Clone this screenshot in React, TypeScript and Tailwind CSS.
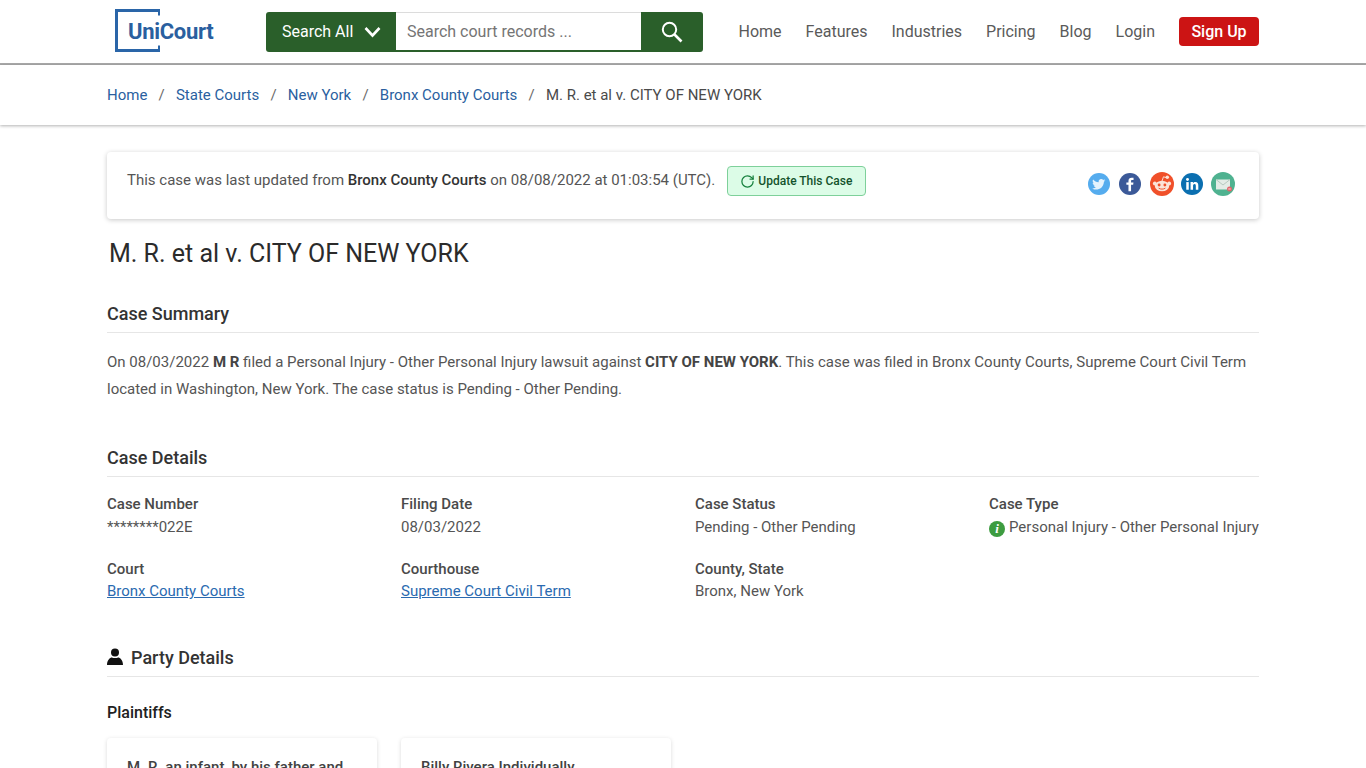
import React from 'react';
import { RotateCw } from 'lucide-react';

const navLinks = ['Home', 'Features', 'Industries', 'Pricing', 'Blog', 'Login'];

const crumbs = ['Home', 'State Courts', 'New York', 'Bronx County Courts'];

const Logo = () => (
  <div className="relative w-[107px] h-[44px] ml-[8px] mb-[1px]">
    <svg width="46" height="44" viewBox="0 0 46 44" className="absolute left-0 top-0">
      <path d="M44 1.500H1.500V41.500H44" fill="none" stroke="#2a65a8" strokeWidth="3" />
      <path d="M44 0V6.500M44 36.500V43" stroke="#2a65a8" strokeWidth="2" />
    </svg>
    <span className="absolute left-[13px] top-[8px] text-[22px] leading-[30px] font-bold tracking-[-0.3px] text-[#2a5f9f]">UniCourt</span>
  </div>
);

const SocialIcons = () => (
  <div className="flex items-center gap-[8px] mr-[24px] mt-[6px]">
    <svg width="22" height="22" viewBox="0 0 23 23">
      <circle cx="11.500" cy="11.500" r="11.500" fill="#55acee" />
      <path d="M18 7.500c-.5.2-1 .4-1.600.5.6-.4 1-.9 1.200-1.500-.5.3-1.100.5-1.700.7a2.800 2.800 0 0 0-4.800 2.500c-2.300-.1-4.400-1.200-5.800-2.900-.8 1.300-.4 3 .9 3.800-.5 0-.9-.1-1.300-.4 0 1.400 1 2.500 2.300 2.800-.4.100-.8.100-1.300 0 .4 1.100 1.400 1.900 2.600 2-1.200.9-2.700 1.300-4.200 1.100 4.500 2.900 11.800.9 12.400-6.900.6-.4 1-.9 1.300-1.300z" fill="#fff" opacity=".85" />
    </svg>
    <svg width="22" height="22" viewBox="0 0 23 23" className="ml-[1px]">
      <circle cx="11.500" cy="11.500" r="11.500" fill="#3b5998" />
      <path d="M12.600 19v-6.600h2.200l.3-2.500h-2.500V8.400c0-.7.200-1.200 1.200-1.200h1.400V5c-.3 0-1-.1-2-.1-2 0-3.300 1.200-3.300 3.400v1.600H7.700v2.500h2.200V19z" fill="#fff" />
    </svg>
    <svg width="24" height="24" viewBox="0 0 25 25" className="ml-[1px]">
      <circle cx="12.500" cy="12.500" r="12.500" fill="#f0502a" />
      <ellipse cx="12.500" cy="14.500" rx="7.500" ry="5.500" fill="#fbe3d8" />
      <circle cx="5" cy="12" r="2" fill="#fbe3d8" />
      <circle cx="20" cy="12" r="2" fill="#fbe3d8" />
      <circle cx="9.500" cy="13.500" r="1.500" fill="#f0502a" />
      <circle cx="15.500" cy="13.500" r="1.500" fill="#f0502a" />
      <path d="M9 16.800c2 1.400 5 1.400 7 0" fill="none" stroke="#f0502a" strokeWidth="1" />
      <path d="M12.500 9.500 14 5l3.500 1" fill="none" stroke="#fbe3d8" strokeWidth="1" />
      <circle cx="18" cy="5.500" r="1.800" fill="#fbe3d8" />
    </svg>
    <svg width="22" height="22" viewBox="0 0 23 23" className="-ml-[1px]">
      <circle cx="11.500" cy="11.500" r="11.500" fill="#0b6fb0" />
      <rect x="5.500" y="9.500" width="2.600" height="8" fill="#fff" />
      <circle cx="6.800" cy="6.800" r="1.500" fill="#fff" />
      <path d="M10 9.500h2.500v1.100c.5-.8 1.400-1.300 2.600-1.300 2.200 0 3 1.400 3 3.700v4.500h-2.600v-4c0-1.200-.3-2-1.300-2-1.100 0-1.600.8-1.600 2v4H10z" fill="#fff" />
    </svg>
    <svg width="24" height="24" viewBox="0 0 24 24">
      <circle cx="12" cy="12" r="12" fill="#4fb290" />
      <rect x="5" y="7.500" width="14" height="10" fill="#e3ece6" />
      <path d="M5 7.500 12 13l7-5.500" fill="none" stroke="#b6c9bf" strokeWidth="1" />
      <circle cx="18.500" cy="17" r="2.500" fill="#e2646a" />
      <path d="M17.300 17h2.400" stroke="#fff" strokeWidth=".8" />
    </svg>
  </div>
);

const Field = ({ label, first, children }: { label: string; first?: boolean; children: React.ReactNode }) => (
  <div>
    <p className={first ? 'text-[15px] leading-[22px] mb-[1px] font-medium text-[#4a4a4a]' : 'text-[15px] leading-[22px] font-medium text-[#4a4a4a]'}>{label}</p>
    <div className="text-[15px] leading-[23px] text-[#555555]">{children}</div>
  </div>
);

const SectionHeading = ({ children }: { children: React.ReactNode }) => (
  <h2 className="text-[18px] leading-[24px] font-medium text-[#333333] pb-[6px] border-b border-[#e6e6e6]">{children}</h2>
);

const App: React.FC = () => {
  return (
    <div className="h-[768px] overflow-hidden bg-white font-['Roboto',sans-serif] text-[#555555]">
      <header className="h-[65px] bg-white border-b-2 border-[#a9a9a9] flex items-center pl-[107px] pr-[107px]">
        <Logo />
        <div className="flex h-[40px] ml-[44px]">
          <button className="w-[130px] h-full bg-[#2a5f2a] rounded-l-[3px] text-white text-[16px] flex items-center pl-[16px] gap-[11px]">
            Search All
            <svg width="17" height="12" viewBox="0 0 17 12">
              <path d="M1.500 2 8.500 9.500 15.500 2" fill="none" stroke="#fff" strokeWidth="2.600" />
            </svg>
          </button>
          <div className="w-[245px] h-full border-t border-[#dcdcdc] border-b-2 border-b-[#2a5f2a] flex items-center pl-[11px] pt-[1px] text-[16px] text-[#757575]">
            Search court records ...
          </div>
          <button className="w-[62px] h-full bg-[#2a5f2a] rounded-r-[3px] flex items-center justify-center">
            <svg width="22" height="22" viewBox="0 0 22 22">
              <circle cx="8.500" cy="8.500" r="6.700" fill="none" stroke="#fff" strokeWidth="2" />
              <path d="M13.500 13.500 20.500 20.500" stroke="#fff" strokeWidth="2.600" />
            </svg>
          </button>
        </div>
        <nav className="flex items-center ml-auto text-[16px] text-[#5a5a5a] gap-[24px]">
          {navLinks.map((link) => (
            <a key={link} className="block">{link}</a>
          ))}
          <a className="block bg-[#cc1414] text-white font-medium rounded-[4px] h-[29px] leading-[29px] w-[80px] text-center">Sign Up</a>
        </nav>
      </header>

      <div className="h-[60px] bg-white shadow-[0_1px_3px_rgba(0,0,0,0.3)] flex items-center px-[107px] text-[15px]">
        {crumbs.map((crumb) => (
          <React.Fragment key={crumb}>
            <a className="text-[#2a5f9f]">{crumb}</a>
            <span className="mx-[11.200px] text-[#6a6a6a]">/</span>
          </React.Fragment>
        ))}
        <span className="text-[#4a4a4a]">M. R. et al v. CITY OF NEW YORK</span>
      </div>

      <main className="px-[107px] pt-[27px]">
        <div className="h-[67px] rounded-[4px] shadow-[0_1px_5px_rgba(0,0,0,0.22)] flex items-start justify-between pl-[20px] pt-[14px]">
          <div className="flex items-center">
            <p className="text-[15px] leading-[28px] -translate-y-[1px] text-[#555555]">
              This case was last updated from <b className="font-medium text-[#333333]">Bronx County Courts</b> on 08/08/2022 at 01:03:54 (UTC).
            </p>
            <button className="ml-[11.500px] h-[30px] w-[139px] rounded-[4px] border border-[#7ed09a] bg-[#dcfce7] flex items-center justify-center gap-[3.500px] text-[12px] font-medium text-[#14532d]">
              <RotateCw className="w-[15px] h-[15px] text-[#15803d]" strokeWidth={2} />
              Update This Case
            </button>
          </div>
          <SocialIcons />
        </div>

        <h1 className="text-[25px] leading-[34px] text-[#2b2b2b] ml-[2px] mt-[18px]">M. R. et al v. CITY OF NEW YORK</h1>

        <section className="mt-[31px]">
          <SectionHeading>Case Summary</SectionHeading>
          <p className="text-[15px] leading-[27px] text-[#555555] mt-[16px]">
            On 08/03/2022 <b className="font-bold text-[#444444]">M R</b> filed a Personal Injury - Other Personal Injury lawsuit against <b className="font-bold text-[#444444]">CITY OF NEW YORK</b>. This case was filed in Bronx County Courts, Supreme Court Civil Term located in Washington, New York. The case status is Pending - Other Pending.
          </p>
        </section>

        <section className="mt-[43px]">
          <SectionHeading>Case Details</SectionHeading>
          <div className="grid grid-cols-[294px_294px_294px_270px] gap-y-[19px] mt-[16px]">
            <Field first label="Case Number">********022E</Field>
            <Field first label="Filing Date">08/03/2022</Field>
            <Field first label="Case Status">Pending - Other Pending</Field>
            <Field first label="Case Type">
              <span className="flex items-center gap-[4px]">
                <span className="w-[16px] h-[16px] mt-[2px] rounded-full bg-[#3d9c40] text-white text-[13px] leading-[16px] font-bold italic font-['Liberation_Serif',serif] text-center">i</span>
                Personal Injury - Other Personal Injury
              </span>
            </Field>
            <Field label="Court"><a className="text-[#2a6ab0] underline">Bronx County Courts</a></Field>
            <Field label="Courthouse"><a className="text-[#2a6ab0] underline">Supreme Court Civil Term</a></Field>
            <Field label="County, State">Bronx, New York</Field>
          </div>
        </section>

        <section className="mt-[43px]">
          <SectionHeading>
            <span className="flex items-center gap-[8px]">
              <svg width="16" height="18" viewBox="0 0 16 18" className="mb-[3px]">
                <circle cx="8" cy="4.500" r="4" fill="#111" />
                <path d="M0 17c0-5 3-7.500 5-7.500 1 .8 5 .8 6 0 2 0 5 2.500 5 7.500z" fill="#111" />
              </svg>
              Party Details
            </span>
          </SectionHeading>
          <h3 className="text-[16px] leading-[22px] font-medium text-[#212121] mt-[25px]">Plaintiffs</h3>
          <div className="flex gap-[24px] mt-[14px]">
            <div className="w-[270px] h-[120px] rounded-[4px] shadow-[0_1px_4px_rgba(0,0,0,0.15)] px-[20px] pt-[18px] text-[15px] leading-[22px] font-medium text-[#424242]">
              M. R. an infant, by his father and
            </div>
            <div className="w-[270px] h-[120px] rounded-[4px] shadow-[0_1px_4px_rgba(0,0,0,0.15)] px-[20px] pt-[18px] text-[15px] leading-[22px] font-medium text-[#424242]">
              Billy Rivera Individually
            </div>
          </div>
        </section>
      </main>
    </div>
  );
};

export default App;
